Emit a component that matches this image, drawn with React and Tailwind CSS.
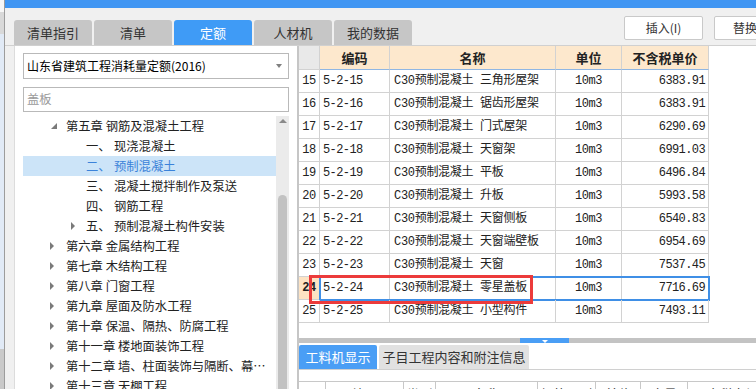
import React from 'react';

const ui = "font-['Noto_Sans_CJK_SC','Liberation_Sans',sans-serif]";
const mono = "font-['Liberation_Mono','Noto_Sans_CJK_SC',monospace]";

const tabs = ['清单指引', '清单', '定额', '人材机', '我的数据'];

const subItems = [
  { no: '一、', label: '现浇混凝土' },
  { no: '二、', label: '预制混凝土', selected: true },
  { no: '三、', label: '混凝土搅拌制作及泵送' },
  { no: '四、', label: '钢筋工程' },
  { no: '五、', label: '预制混凝土构件安装', arrow: true },
];

const chapters = [
  '第六章 金属结构工程',
  '第七章 木结构工程',
  '第八章 门窗工程',
  '第九章 屋面及防水工程',
  '第十章 保温、隔热、防腐工程',
  '第十一章 楼地面装饰工程',
  '第十二章 墙、柱面装饰与隔断、幕墙工程',
  '第十三章 天棚工程',
];

const rows = [
  [15, '5-2-15', '三角形屋架', '6383.91'],
  [16, '5-2-16', '锯齿形屋架', '6383.91'],
  [17, '5-2-17', '门式屋架', '6290.69'],
  [18, '5-2-18', '天窗架', '6991.03'],
  [19, '5-2-19', '平板', '6496.84'],
  [20, '5-2-20', '升板', '5993.58'],
  [21, '5-2-21', '天窗侧板', '6540.83'],
  [22, '5-2-22', '天窗端壁板', '6954.69'],
  [23, '5-2-23', '天窗', '7537.45'],
  [24, '5-2-24', '零星盖板', '7716.69'],
  [25, '5-2-25', '小型构件', '7493.11'],
];

const bottomCols = [
  ['', 'w-[27px]'],
  ['编码', 'w-[78px]'],
  ['类别', 'w-[32px]'],
  ['名称', 'w-[102px]'],
  ['规格及型号', 'w-[58px]'],
  ['单位', 'w-[45px]'],
  ['含量', 'w-[47px]'],
  ['不含税市场价', 'w-[90px]'],
];

const RightArrow = () => (
  <span className="w-0 h-0 border-y-[4px] border-y-transparent border-l-[4px] border-l-[#7a7a7a]" />
);

const OpenArrow = () => (
  <svg width="6" height="6" viewBox="0 0 6 6">
    <polygon points="6,0 6,6 0,6" fill="#7a7a7a" />
  </svg>
);

const cell = 'h-full border-r border-b border-[#d2d2d2] flex items-center shrink-0';

const App = () => {
  return (
    <div className={`w-[756px] h-[389px] overflow-hidden flex bg-[#f0f0f0] text-[#222] ${ui}`}>
      {/* window behind */}
      <div className="w-[5px] flex flex-col border-r border-[#9c9c9c]">
        <div className="h-[12px] bg-[#f7f7f7]" />
        <div className="h-[22px] bg-[#d9d9d9]" />
        <div className="flex-1 bg-[#e1eaf6]" />
        <div className="h-[40px] bg-[#c9c9c9]" />
      </div>

      <div className="flex-1 flex flex-col min-w-0">
        {/* title bar */}
        <div className="h-[8px] bg-[#4096f3] shrink-0" />

        {/* tabs + buttons */}
        <div className="h-[37px] flex items-end pl-[9px] shrink-0">
          <div className="flex gap-[2px]">
            {tabs.map((t) => (
              <div
                key={t}
                className={`w-[78px] h-[25px] rounded-t-[3px] flex items-center justify-center text-[13px] ${
                  t === '定额' ? 'bg-[#3f9bf6] text-white' : 'bg-[#c6c6c6] text-[#333]'
                }`}
              >
                {t}
              </div>
            ))}
          </div>
          <div className="flex-1" />
          <div className="self-start mt-[8px] flex gap-[11px] -mr-[20px]">
            <button className="w-[79px] h-[24px] bg-white border border-[#c9c9c9] rounded-[2px] text-[12px] text-[#333]">
              插入(I)
            </button>
            <button className="w-[62px] h-[24px] bg-white border border-[#c9c9c9] rounded-[2px] text-[12px] text-[#333]">
              替换
            </button>
          </div>
        </div>

        {/* body */}
        <div className="flex-1 flex min-h-0 border-t border-[#d0d0d0]">
          {/* left panel */}
          <div className="ml-[9px] w-[283px] bg-white border-l border-[#dcdcdc] flex flex-col pl-[8px] pt-[7px]">
            <div className="w-[266px] h-[26px] border border-[#b9b9b9] flex items-center justify-between pl-[3px] pr-[6px] text-[12px] text-black">
              <span>山东省建筑工程消耗量定额(2016)</span>
              <span className="w-0 h-0 border-x-[3.5px] border-x-transparent border-t-[4px] border-t-[#808080]" />
            </div>
            <div className="mt-[8px] w-[266px] h-[25px] border border-[#b9b9b9] flex items-center pl-[3px] text-[12.3px] text-[#9a9a9a]">
              盖板
            </div>

            <div className="flex-1 flex mt-[4px] min-h-0">
              <div className="w-[253px] overflow-hidden text-[12.3px]">
                <div className="h-[20px] flex items-center pl-[28px]">
                  <span className="w-[15px] flex"><OpenArrow /></span>
                  <span>第五章 钢筋及混凝土工程</span>
                </div>
                {subItems.map((s) => (
                  <div
                    key={s.no}
                    className={`h-[20px] flex items-center pl-[48px] ${s.selected ? 'bg-[#cce4f8] text-[#3b82d9]' : ''}`}
                  >
                    <span className="w-[15px] flex">{s.arrow && <RightArrow />}</span>
                    <span className="w-[28px]">{s.no}</span>
                    <span>{s.label}</span>
                  </div>
                ))}
                {chapters.map((c) => (
                  <div key={c} className="h-[20px] flex items-center pl-[27px]">
                    <span className="w-[16px] flex shrink-0"><RightArrow /></span>
                    <span className="truncate pr-[4px]">{c}</span>
                  </div>
                ))}
              </div>
              {/* scrollbar */}
              <div className="w-[13px] bg-[#ebebeb] flex flex-col items-center">
                <span className="mt-[3px] w-0 h-0 border-x-[4px] border-x-transparent border-b-[4px] border-b-[#8a8a8a]" />
                <div className="mt-[72px] w-[9px] flex-1 bg-[#c2c2c2] rounded-t-[5px]" />
              </div>
            </div>
          </div>

          {/* right side */}
          <div className="flex-1 flex flex-col bg-white border-l-2 border-[#c6c6c6] min-w-0 overflow-hidden">
            <div className={`relative h-[292px] shrink-0 text-[12px] ${mono}`}>
              {/* header */}
              <div className={`h-[24px] flex ${ui} text-[13px] font-bold`}>
                <div className="w-[21px] h-full bg-[#e9e9e9] border-r border-b border-[#d2d2d2] shrink-0" />
                {[
                  ['编码', 'w-[70px]'],
                  ['名称', 'w-[166px]'],
                  ['单位', 'w-[66px]'],
                  ['不含税单价', 'w-[87px]'],
                ].map(([t, w]) => (
                  <div key={t} className={`${w} h-full bg-[#fde8cd] border-r border-[#d2d2d2] border-b border-b-[#8fb6e3] flex items-center justify-center shrink-0`}>
                    {t}
                  </div>
                ))}
              </div>
              {/* rows */}
              {rows.map(([n, code, name, price]) => {
                const sel = n === 24;
                return (
                  <div key={n} className="h-[23px] flex">
                    <div className={`${cell} w-[21px] justify-center tracking-[-0.5px] ${sel ? 'bg-[#fde3c3] font-bold' : ''}`}>
                      {n}
                    </div>
                    <div className={`h-full flex ${sel ? 'outline-2 -outline-offset-1 outline-[#3f8fe6]' : ''}`}>
                      <div className={`${cell} w-[70px] pl-[3px] tracking-[-0.6px]`}>{code}</div>
                      <div className={`${cell} w-[166px] pl-[4px] tracking-[-0.3px]`}>C30预制混凝土 {name}</div>
                      <div className={`${cell} w-[66px] justify-center tracking-[-0.5px]`}>10m3</div>
                      <div className={`${cell} w-[87px] justify-end pr-[3px] tracking-[-0.6px]`}>{price}</div>
                    </div>
                  </div>
                );
              })}
              {/* annotation */}
              <div className="absolute left-[10px] top-[229px] w-[224px] h-[29px] border-[3px] border-[#ec3b3b]" />
            </div>

            {/* splitter */}
            <div className="h-[5px] bg-[#c3c3c3] flex pl-[221px] shrink-0">
              <div className="w-[49px] bg-[#4a9ef5] flex justify-center items-end">
                <span className="w-0 h-0 border-x-[3px] border-x-transparent border-t-[3px] border-t-white" />
              </div>
            </div>

            {/* bottom tabs */}
            <div className="mt-[2px] h-[25px] flex gap-[2px] border-b border-[#d0d0d0] shrink-0">
              <div className="w-[78px] h-[24px] bg-[#4a9ef5] text-white text-[13px] flex items-center justify-center rounded-t-[2px]">
                工料机显示
              </div>
              <div className="w-[150px] h-[24px] bg-[#e1e1e1] text-[#333] text-[13px] flex items-center justify-center rounded-t-[2px]">
                子目工程内容和附注信息
              </div>
            </div>
            <div className="mt-[11px] flex h-[20px] border-t border-[#c8c8c8] shrink-0">
              {bottomCols.map(([t, w], i) => (
                <div key={i} className={`${w} shrink-0 border-r border-[#c8c8c8] text-[13px] text-center pt-[5px] leading-none`}>
                  {t}
                </div>
              ))}
            </div>
          </div>
        </div>
      </div>
    </div>
  );
};

export default App;
